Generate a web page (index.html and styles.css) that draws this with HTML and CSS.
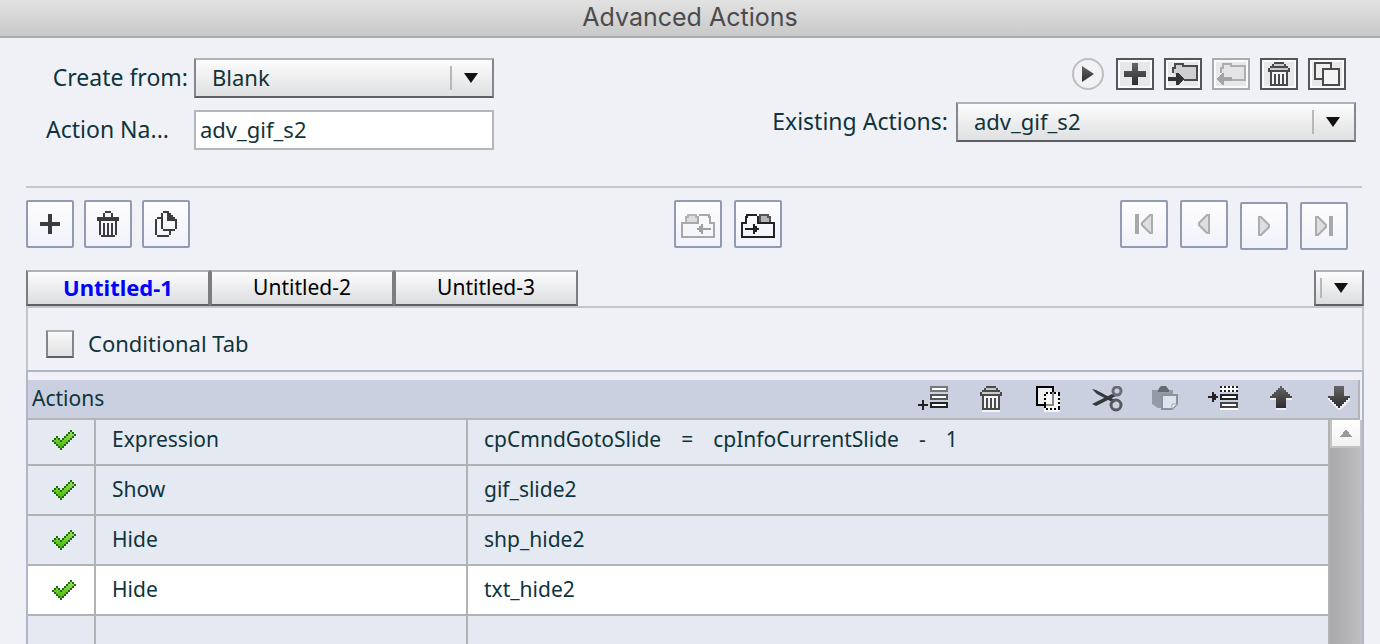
FILE: index.html
```html
<!DOCTYPE html>
<html lang="en">
<head>
  <meta charset="UTF-8">
  <meta name="viewport" content="width=device-width, initial-scale=1.0">
  <title>Advanced Actions</title>
  <link rel="stylesheet" href="styles.css">
</head>
<body>
  <svg width="0" height="0" class="defs" aria-hidden="true">
    <defs>
      <linearGradient id="dark" x1="0" y1="0" x2="0" y2="1">
        <stop offset="0" stop-color="#666"/>
        <stop offset="1" stop-color="#2c2c2e"/>
      </linearGradient>
      <linearGradient id="green" x1="0" y1="0" x2="0" y2="1">
        <stop offset="0" stop-color="#9be05a"/>
        <stop offset="1" stop-color="#43b800"/>
      </linearGradient>
    </defs>
    <symbol id="check" viewBox="0 0 12 10">
      <path fill="url(#green)" d="M9 1h1v1h1v1h-1v1H9v1H8v1H7v1H6v1H5v1H4V8H3V7H2V6H1V5h1V4h1v1h1v1h1V5h1V4h1V3h1V2h1z"/>
      <path stroke="#1d6b10" d="M9 .5h1M8 1.5h1m1 0h1M7 2.5h1m3 0h1M2 3.5h1m3 0h1m3 0h1M1 4.5h1m1 0h1m1 0h1m3 0h1M0 5.5h1m3 0h1m3 0h1M1 6.5h1m5 0h1M2 7.5h1m3 0h1M3 8.5h1m1 0h1M4 9.5h1"/>
    </symbol>
    <symbol id="trash" viewBox="0 0 11 12">
      <path fill="#f4f4f5" d="M1 4h9v8H1z"/>
      <path fill="#c9c9cc" d="M1 2h9v2H1zM3 0h5v2H3z"/>
      <path fill="#4a4a4c" d="M3 0h5v1H3zM2 1h1v1H2zM8 1h1v1H8zM1 2h9v1H1zM0 3h1v1H0zM10 3h1v1h-1zM0 4h11v1H0zM1 5h1v6H1zM9 5h1v6H9zM3 6h1v5H3zM5 6h1v5H5zM7 6h1v5H7zM1 11h9v1H1z"/>
    </symbol>
    <symbol id="caret" viewBox="0 0 14 10">
      <path fill="#111" d="M0 0h14L7 10z"/>
    </symbol>
  </svg>

  <header class="titlebar"><h1>Advanced Actions</h1></header>

  <main>
    <section class="top">
      <div class="create">
        <label for="createFrom">Create from:</label>
        <div class="dropdown">
          <select id="createFrom"><option>Blank</option></select>
          <svg class="caret"><use href="#caret"/></svg>
        </div>
        <label for="actionName" class="name-label">Action Na...</label>
        <input type="text" id="actionName" value="adv_gif_s2">
      </div>

      <div class="existing">
        <div class="icon-row">
          <button type="button" class="play" aria-label="Preview">
            <svg width="12" height="16" viewBox="0 0 12 16"><path fill="url(#dark)" d="M0 0l12 8-12 8z"/></svg>
          </button>
          <button type="button" class="small" aria-label="New action">
            <svg width="22" height="22" viewBox="0 0 22 22"><path fill="url(#dark)" d="M8 0h6v8h8v6h-8v8H8v-8H0V8h8z"/></svg>
          </button>
          <button type="button" class="small" aria-label="Import action">
            <svg width="30" height="22" viewBox="0 0 15 11">
              <path fill="#cfcfd1" stroke="#4a4a4c" d="M2.500 5V2.500h1v-2h4v1h7v7H8"/>
              <path fill="#333" d="M0 7h4V5h1l3 3-3 3H4V9H0z"/>
            </svg>
          </button>
          <button type="button" class="small" aria-label="Export action" disabled>
            <svg width="30" height="22" viewBox="0 0 15 11">
              <path fill="#e4e4e6" stroke="#adadb0" d="M2.500 5V2.500h1v-2h4v1h7v7H8"/>
              <path fill="#a4a4a6" d="M8 7H4V5H3L0 8l3 3h1V9h4z"/>
            </svg>
          </button>
          <button type="button" class="small" aria-label="Delete action">
            <svg width="22" height="24"><use href="#trash"/></svg>
          </button>
          <button type="button" class="small" aria-label="Duplicate action">
            <svg width="26" height="24" viewBox="0 0 26 24">
              <path fill="#eee" stroke="#4a4a4c" stroke-width="2" d="M1 1h16v16H1z"/>
              <path fill="#f4f4f5" stroke="#4a4a4c" stroke-width="2" d="M9 7h16v16H9z"/>
            </svg>
          </button>
        </div>
        <div class="existing-field">
          <label for="existingActions">Existing Actions:</label>
          <div class="dropdown wide">
            <select id="existingActions"><option>adv_gif_s2</option></select>
            <svg class="caret"><use href="#caret"/></svg>
          </div>
        </div>
      </div>
    </section>

    <section class="toolbar">
      <div class="group">
        <button type="button" aria-label="Add tab">
          <svg width="20" height="20" viewBox="0 0 20 20"><path fill="#3c3c3e" d="M8 0h4v8h8v4h-8v8H8v-8H0V8h8z"/></svg>
        </button>
        <button type="button" aria-label="Delete tab">
          <svg width="22" height="26" viewBox="0 0 11 13">
            <path fill="#3c3c3e" d="M4 0h3v1h1v2h3v2h-1v7H9v1H2v-1H1V5H0V3h3V1h1z"/>
            <path fill="#f6f6fb" d="M4 1h3v2H4zM2 5h7v1H2zM2 6h1v6H2zM4 6h1v6H4zM6 6h1v6H6zM8 6h1v6H8z"/>
          </svg>
        </button>
        <button type="button" aria-label="Duplicate tab">
          <svg width="22" height="26" viewBox="0 0 11 13">
            <path fill="#3c3c3e" d="M1 3h2v1H1zM0 4h1v8H0zM1 12h6v1H1zM7 10h1v2H7z"/>
            <path fill="#3c3c3e" d="M4 0h3v1H4zM3 1h1v8H3zM4 9h6v1H4zM10 4h1v5h-1z"/>
            <path fill="#3c3c3e" d="M6 0h1v1h1v1h1v1h1v1h1v1H6z"/>
          </svg>
        </button>
      </div>

      <div class="group merge">
        <button type="button" aria-label="Previous group" disabled>
          <svg width="34" height="28" viewBox="0 -2 17 14">
            <path fill="#dcdcde" stroke="#b4b4b6" d="M2.500 4V1.500h1v-1h4v1h1V4"/>
            <path fill="none" stroke="#a8a8aa" d="M9 .5h5v1h.5v3h2v7H.5v-7h8V1"/>
            <path fill="#a0a0a2" d="M8 7h1V6h1V5h1v2h4v1h-4v2h-1V9H9V8H8z"/>
          </svg>
        </button>
        <button type="button" aria-label="Next group">
          <svg width="34" height="28" viewBox="0 -2 17 14">
            <path fill="#b4b4b6" stroke="#555" d="M9.500 4V.5h4v1h1V4"/>
            <path fill="none" stroke="#222" d="M8 .5H3v1h-.5v3h-2v7h16v-7h-8V1"/>
            <path fill="#222" d="M2 7h4V5h1v1h1v1h1v1H8v1H7v1H6V8H2z"/>
          </svg>
        </button>
      </div>

      <div class="nav">
        <div class="group merge">
          <button type="button" aria-label="First" disabled>
            <svg width="18" height="20" viewBox="0 0 18 20"><path fill="#a8a8aa" d="M0 0h4v20H0z"/><path class="outline" d="M17 1v18h-2l-8-8V9l8-8z"/></svg>
          </button>
          <button type="button" aria-label="Previous" disabled>
            <svg width="12" height="20" viewBox="0 0 12 20"><path class="outline" d="M11 1v18H9l-8-8V9l8-8z"/></svg>
          </button>
        </div>
        <div class="group merge forward">
          <button type="button" aria-label="Next" disabled>
            <svg width="12" height="20" viewBox="0 0 12 20"><path class="outline" d="M1 1v18h2l8-8V9L3 1z"/></svg>
          </button>
          <button type="button" aria-label="Last" disabled>
            <svg width="18" height="20" viewBox="0 0 18 20"><path fill="#a8a8aa" d="M14 0h4v20h-4z"/><path class="outline" d="M1 1v18h2l8-8V9L3 1z"/></svg>
          </button>
        </div>
      </div>
    </section>

    <nav class="tabs">
      <button type="button" class="tab active">Untitled-1</button>
      <button type="button" class="tab">Untitled-2</button>
      <button type="button" class="tab">Untitled-3</button>
      <button type="button" class="tab-list" aria-label="All tabs">
        <svg width="14" height="10"><use href="#caret"/></svg>
      </button>
    </nav>

    <section class="panel">
      <div class="conditional">
        <input type="checkbox" id="conditional">
        <label for="conditional">Conditional Tab</label>
      </div>

      <div class="actions">
        <div class="actions-head">
          <h2>Actions</h2>
          <div class="tools">
            <button type="button" aria-label="Add">
              <svg viewBox="0 0 16 13">
                <path fill="#fff" d="M6 0h9v3H6zM6 4h9v3H6zM6 8h9v3H6z"/>
                <path fill="none" stroke="#77787c" d="M6.500.5h8v2h-8z"/>
                <path fill="none" stroke="#55565a" d="M6.500 4.500h8v2h-8z"/>
                <path fill="none" stroke="#222" d="M6.500 8.500h8v2h-8z"/>
                <path fill="#222" d="M2 7h1v2h2v1H3v2H2v-2H0V9h2z"/>
              </svg>
            </button>
            <button type="button" aria-label="Remove">
              <svg viewBox="0 0 16 13">
                <path fill="#f4f4f6" d="M3 12h9v1H3z"/>
                <use href="#trash" x="2" y="0" width="11" height="12"/>
              </svg>
            </button>
            <button type="button" aria-label="Copy">
              <svg viewBox="0 0 16 13">
                <path fill="#eee" stroke="#000" d="M1.500.5h8v9h-8z"/>
                <path fill="#f6f6f6" d="M6 3h7v10H5v-2h1z"/>
                <path fill="none" stroke="#888" d="M9.500 3v6.500H6"/>
                <path fill="none" stroke="#000" stroke-dasharray="1 1" d="M6 3.500h7M5.500 4v8M12.500 4v8M6 11.500h7"/>
              </svg>
            </button>
            <button type="button" aria-label="Cut">
              <svg class="smooth" viewBox="0 0 32 26">
                <path fill="#34373c" d="M0 3l4 1 19 10-1 3L5 8zM0 18l20-10 4 2L4 20z"/>
                <circle cx="25" cy="5" r="4" fill="none" stroke="#6a6d73" stroke-width="3"/>
                <circle cx="24" cy="19" r="5" fill="none" stroke="#55585e" stroke-width="3"/>
              </svg>
            </button>
            <button type="button" aria-label="Paste">
              <svg class="smooth" viewBox="0 0 32 26">
                <path fill="#949aa6" d="M2 4h7V2l3-2h3l2 2v2h6v18H8l-6-4z"/>
                <path fill="#666a73" d="M8 4l3-4h5l3 4v2H8z"/>
                <path fill="#dde2ec" stroke="#8c919c" stroke-width="2" d="M12 9h15v9l-5 5H12z"/>
                <path fill="#f4f5f8" stroke="#a0a5b0" d="M27 18h-5v5z"/>
              </svg>
            </button>
            <button type="button" aria-label="Insert">
              <svg viewBox="0 0 16 13">
                <path fill="#fff" d="M6 0h9v3H6zM6 4h9v3H6zM6 8h9v4H6z"/>
                <path stroke="#222" stroke-dasharray="1 1" d="M6 .5h9M6 2.500h9"/>
                <path fill="none" stroke="#222" d="M6.500 4.500h8v2h-8z"/>
                <path fill="none" stroke="#444" d="M6.500 8.500h8v2h-8z"/>
                <path fill="#222" d="M0 5h2V3h1v1h1v1h1v1H4v1H3v1H2V6H0z"/>
              </svg>
            </button>
            <button type="button" aria-label="Move up">
              <svg viewBox="0 0 16 13">
                <path fill="#eef0f5" d="M2 6h11v1h-3v5H5V7H2z"/>
                <path fill="url(#dark)" d="M7 0h1v1h1v1h1v1h1v1h1v1h1v1h-3v5H5V6H2V5h1V4h1V3h1V2h1V1h1z"/>
              </svg>
            </button>
            <button type="button" aria-label="Move down">
              <svg viewBox="0 0 16 13">
                <path fill="#eef0f5" d="M2 6h11v1L8 12H7L2 7z"/>
                <path fill="url(#dark)" d="M5 0h5v5h3v1h-1v1h-1v1h-1v1H9v1H8v1H7v-1H6V9H5V8H4V7H3V6H2V5h3z"/>
              </svg>
            </button>
          </div>
        </div>

        <div class="list">
          <table>
            <tbody>
              <tr>
                <td class="state"><svg width="24" height="20"><use href="#check"/></svg></td>
                <td class="command">Expression</td>
                <td>
                  <div class="expression">
                    <span>cpCmndGotoSlide</span><span>=</span><span>cpInfoCurrentSlide</span><span>-</span><span>1</span>
                  </div>
                </td>
              </tr>
              <tr>
                <td class="state"><svg width="24" height="20"><use href="#check"/></svg></td>
                <td class="command">Show</td>
                <td>gif_slide2</td>
              </tr>
              <tr>
                <td class="state"><svg width="24" height="20"><use href="#check"/></svg></td>
                <td class="command">Hide</td>
                <td>shp_hide2</td>
              </tr>
              <tr class="selected">
                <td class="state"><svg width="24" height="20"><use href="#check"/></svg></td>
                <td class="command">Hide</td>
                <td>txt_hide2</td>
              </tr>
              <tr>
                <td class="state"></td>
                <td class="command"></td>
                <td></td>
              </tr>
            </tbody>
          </table>
          <div class="scrollbar">
            <button type="button" aria-label="Scroll up">
              <svg width="12" height="8" viewBox="0 0 12 8"><path fill="#999" d="M6 0l6 8H0z"/></svg>
            </button>
          </div>
        </div>
      </div>
    </section>
  </main>
</body>
</html>
```
FILE: styles.css
```css
* {
  box-sizing: border-box;
}

body {
  margin: 0;
  height: 100vh;
  display: flex;
  flex-direction: column;
  overflow: hidden;
  background-color: #f0f1f7;
  color: #0f343b;
  font-family: "Noto Sans", Tahoma, sans-serif;
  font-size: 22px;
  line-height: 28px;
}

button,
input,
select {
  margin: 0;
  padding: 0;
  font: inherit;
  color: inherit;
  border-radius: 0;
}

button {
  display: flex;
  align-items: center;
  justify-content: center;
  background: none;
  border: none;
}

svg {
  display: block;
  shape-rendering: crispEdges;
}

.defs {
  position: absolute;
}

.smooth,
.caret,
.play svg,
.nav svg,
.tab-list svg {
  shape-rendering: auto;
}

.titlebar {
  height: 38px;
  flex: none;
  background: linear-gradient(#e2e2e2, #c9c9c9);
  border-bottom: 2px solid #ababab;
}

.titlebar h1 {
  margin: 0;
  text-align: center;
  color: #4b4b4b;
  font: 400 25px/34px Inter, sans-serif;
}

main {
  flex: 1;
  min-height: 0;
  display: flex;
  flex-direction: column;
  padding: 20px 16px 0 26px;
}

/* name and source of the action */
.top {
  display: flex;
  justify-content: space-between;
  height: 130px;
  margin-right: 2px;
  padding: 0 6px 0 20px;
  border-bottom: 2px solid #c8c8cc;
}

.create {
  display: grid;
  grid-template-columns: 142px 300px;
  grid-auto-rows: 40px;
  gap: 12px 6px;
  align-items: center;
}

.top label,
.conditional label {
  padding-bottom: 2px;
  white-space: nowrap;
}

.top label {
  font-size: 23px;
}

.create label {
  text-align: right;
}

.create .name-label {
  text-align: left;
}

.create input {
  width: 100%;
  height: 40px;
  padding: 0 4px 2px;
  background: #fff;
  border: 2px solid #b4b6bb;
}

.dropdown {
  display: grid;
  align-items: center;
}

.dropdown.wide {
  width: 400px;
}

.dropdown select,
.dropdown .caret {
  grid-area: 1 / 1;
}

.dropdown select {
  appearance: none;
  width: 100%;
  height: 40px;
  padding: 0 16px 2px;
  background: linear-gradient(#fcfcfd, #dfe0e1);
  border: 2px solid;
  border-color: #b0b2b7 #85878c #5c5f66;
}

.dropdown .caret {
  justify-self: end;
  width: 44px;
  height: 24px;
  padding: 7px 16px 7px 12px;
  border-left: 2px solid #b8b8bb;
  pointer-events: none;
}

.icon-row {
  display: flex;
  justify-content: flex-end;
  gap: 10px;
  margin-right: 10px;
}

.small {
  width: 38px;
  height: 32px;
  background: #e7e8ea;
  border: 2px solid #55565a;
  box-shadow: inset 0 0 0 2px #fafafb;
}

.small:disabled {
  border-color: #a9abaf;
}

.play {
  width: 32px;
  height: 32px;
  margin-right: 2px;
  background: #f2f2f4;
  border: 2px solid #bdbec1;
  border-radius: 50%;
}

.existing-field {
  display: flex;
  align-items: center;
  justify-content: flex-end;
  gap: 8px;
  margin-top: 12px;
}

/* tab toolbar */
.toolbar {
  display: grid;
  grid-template-columns: 19fr auto 17fr;
  margin: 12px 2px 0 0;
}

.group {
  display: flex;
  gap: 10px;
}

.group.merge {
  gap: 12px;
}

.group button {
  width: 48px;
  height: 48px;
  background: linear-gradient(#fdfdfe, #f1f2fa);
  border: 2px solid #929bb2;
  border-radius: 2px;
}

.nav {
  display: flex;
  justify-content: flex-end;
  gap: 12px;
  height: 50px;
  padding-right: 14px;
}

.nav .forward {
  align-self: flex-end;
}

.outline {
  fill: #dedee0;
  stroke: #acacae;
  stroke-width: 2;
}

.tabs {
  display: flex;
  margin-top: 20px;
}

.tab,
.tab-list {
  width: 184px;
  height: 36px;
  padding-bottom: 2px;
  color: #000;
  font-size: 21px;
  background: linear-gradient(#fcfcfd, #dcdddf);
  border: 2px solid;
  border-color: #b0b1b4 #7c7d80 #5f6064;
}

.tab.active {
  color: #00f;
  font-size: 22px;
  font-weight: 700;
}

.tab-list {
  justify-content: flex-start;
  width: 50px;
  margin-left: auto;
  padding: 4px;
}

.tab-list svg {
  box-sizing: content-box;
  padding: 5px 0 5px 12px;
  border-left: 2px solid #b8b8bb;
}

.panel {
  flex: 1;
  min-height: 0;
  display: flex;
  flex-direction: column;
  border: solid #c6c6ca;
  border-width: 2px 2px 0;
}

.conditional {
  display: flex;
  align-items: center;
  gap: 14px;
  height: 62px;
  padding: 10px 18px 0;
}

.conditional input {
  appearance: none;
  width: 28px;
  height: 28px;
  background: linear-gradient(#fafafa, #dfe0e2);
  border: 2px solid;
  border-color: #b0b1b4 #85868a #606166;
}

/* action list */
.actions {
  flex: 1;
  min-height: 0;
  display: flex;
  flex-direction: column;
  margin: 0 -2px;
  padding-top: 8px;
  border: solid #b0b6ca;
  border-width: 2px 2px 0;
}

.actions-head {
  flex: none;
  display: flex;
  align-items: center;
  justify-content: space-between;
  height: 40px;
  margin-right: 2px;
  padding: 0 2px 0 4px;
  background: #cad0df;
  border: solid #b4b4b6;
  border-width: 0 2px 2px 0;
}

.actions-head h2 {
  margin: 0;
  padding-bottom: 2px;
  font-size: 21px;
  font-weight: 400;
}

.tools {
  display: flex;
  gap: 26px;
}

.tools svg {
  width: 32px;
  height: 26px;
}

.list {
  flex: 1;
  min-height: 0;
  display: flex;
  align-items: flex-start;
  overflow: hidden;
}

table {
  flex: 1;
  table-layout: fixed;
  border-collapse: separate;
  border-spacing: 0;
  background: #e5e9f1;
  font-size: 21px;
}

td {
  height: 50px;
  padding: 0 16px 2px;
  border: solid #b2b2b4;
  border-width: 0 2px 2px 0;
}

tr:first-child td {
  height: 46px;
  padding-bottom: 6px;
}

.selected td {
  background: #fff;
}

td.state {
  width: 68px;
  padding: 0 18px 0 24px;
}

tr:first-child td.state {
  padding-bottom: 4px;
}

.command {
  width: 372px;
}

.expression {
  display: flex;
  gap: 20px;
}

.scrollbar {
  align-self: stretch;
  width: 32px;
  background: linear-gradient(to right, #a9a9ab, #bfbfc1);
}

.scrollbar button {
  width: 100%;
  height: 28px;
  background: linear-gradient(#fff, #f2f2f3);
  border: solid #c4c4c6;
  border-width: 0 2px 2px;
}
```
